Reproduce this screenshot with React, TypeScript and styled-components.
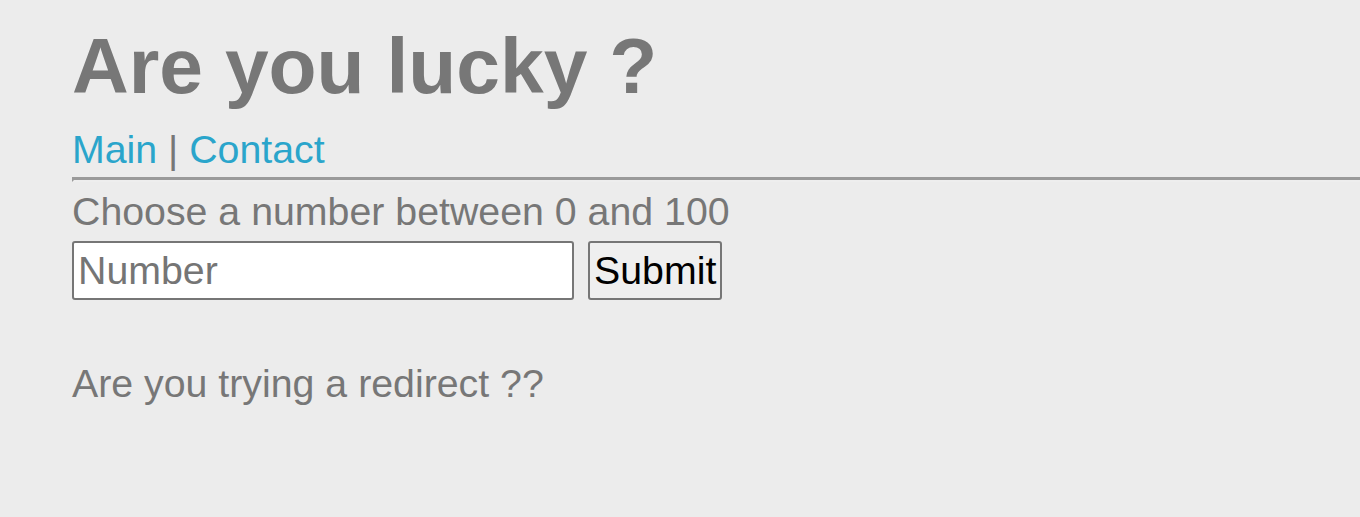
import React from "react";
import styled, { createGlobalStyle } from "styled-components";

const GlobalStyle = createGlobalStyle`
  html, body {
    margin: 0;
    padding: 0;
    background: #ececec;
    overflow: hidden;
  }
  body {
    font-family: "Liberation Sans", Arial, sans-serif;
    font-size: 39.3px;
    color: #777777;
  }
`;

const Page = styled.div`
  padding: 21px 0 0 72px;
  min-height: 517px;
  box-sizing: border-box;
`;

const Title = styled.h1`
  margin: 0;
  font-size: 78.6px;
  font-weight: bold;
  line-height: normal;
  color: #777777;
`;

const Nav = styled.nav`
  margin-top: 15px;
  line-height: normal;
`;

const NavLink = styled.a`
  color: #2aa5cb;
  text-decoration: none;
`;

const Separator = styled.span`
  color: #777777;
`;

const Rule = styled.hr`
  margin: 5px 0 0 0;
  height: 0;
  border-style: solid;
  border-width: 3px 0 2px 2px;
  border-color: #9a9a9a #eeeeee #eeeeee #9a9a9a;
`;

const Prompt = styled.div`
  margin-top: 7px;
  line-height: normal;
`;

const Form = styled.form`
  display: flex;
  align-items: stretch;
  gap: 14px;
  margin-top: 7px;
`;

const NumberInput = styled.input`
  box-sizing: border-box;
  width: 502px;
  height: 59px;
  padding: 0 4px;
  font-family: "Liberation Sans", Arial, sans-serif;
  font-size: 39.3px;
  color: #000;
  background: #ffffff;
  border: 2px solid #767676;
  border-radius: 3px;
  outline: none;

  &::placeholder {
    color: #757575;
  }
`;

const SubmitButton = styled.button`
  box-sizing: border-box;
  height: 59px;
  padding: 0 4px;
  font-family: "Liberation Sans", Arial, sans-serif;
  font-size: 39.3px;
  color: #000;
  background: #efefef;
  border: 2px solid #767676;
  border-radius: 3px;
`;

const Message = styled.p`
  margin: 61px 0 0 0;
  line-height: normal;
`;

export default function App() {
  return (
    <>
      <GlobalStyle />
      <Page>
        <Title>Are you lucky ?</Title>
        <Nav>
          <NavLink href="#">Main</NavLink>
          <Separator> | </Separator>
          <NavLink href="#">Contact</NavLink>
        </Nav>
        <Rule />
        <Prompt>Choose a number between 0 and 100</Prompt>
        <Form onSubmit={(e) => e.preventDefault()}>
          <NumberInput type="text" placeholder="Number" />
          <SubmitButton type="submit">Submit</SubmitButton>
        </Form>
        <Message>Are you trying a redirect ??</Message>
      </Page>
    </>
  );
}
